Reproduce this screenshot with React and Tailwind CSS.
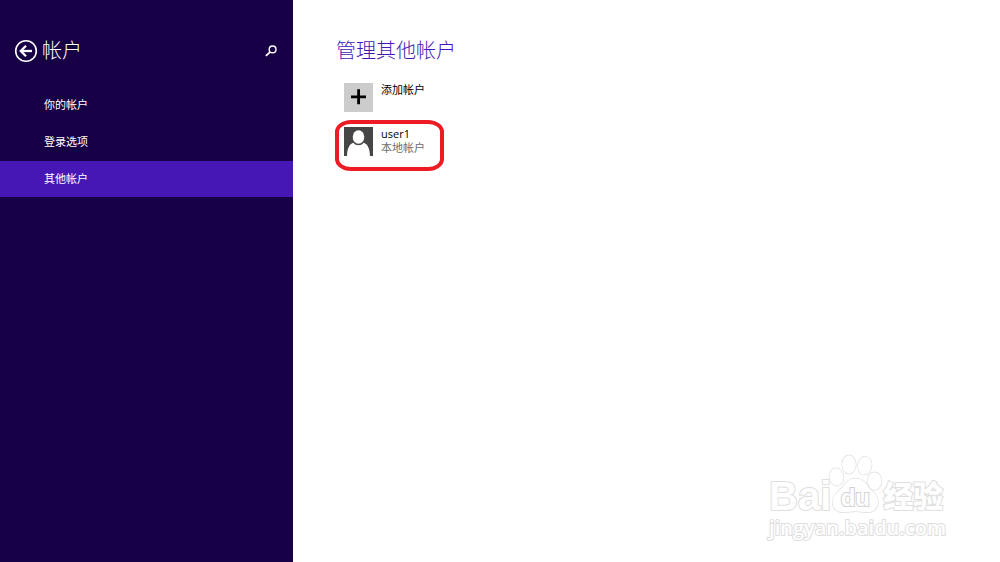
import { useState } from 'react'

const NAV = [
  { id: 'yours',  label: '你的帐户' },
  { id: 'signin', label: '登录选项' },
  { id: 'other',  label: '其他帐户' },
]

function BackIcon() {
  return (
    <svg viewBox="0 0 24 24" className="size-6" fill="none" stroke="currentColor" aria-hidden="true">
      <circle cx="12" cy="12" r="10.3" strokeWidth="1.6" />
      <path d="M7 12H18" strokeWidth="2.300" />
      <path d="M12 6.800 6.800 12l5.200 5.200" strokeWidth="2.300" />
    </svg>
  )
}

function SearchIcon() {
  return (
    <svg viewBox="0 0 12 12" className="size-3" fill="none" stroke="currentColor" aria-hidden="true">
      <circle cx="7.6" cy="4.4" r="3.4" strokeWidth="1.4" />
      <path d="M5.200 6.900.9 10.900" strokeWidth="1.900" />
    </svg>
  )
}

function PlusTile() {
  return (
    <svg viewBox="0 0 29 29" className="size-[29px] shrink-0 bg-[#cccccc]" aria-hidden="true">
      <path d="M7 13.800H22M14.600 6.300V21.300" stroke="#000" strokeWidth="2.800" />
    </svg>
  )
}

function UserTile() {
  return (
    <svg viewBox="0 0 29 29" className="size-[29px] shrink-0 bg-[#464646]" aria-hidden="true">
      <ellipse cx="14.500" cy="10" rx="5.800" ry="6.800" fill="#fff" />
      <path d="M3 29C3.200 22 5.300 17 9.300 15.800c1.300 1.700 3.200 2.500 5.200 2.500s3.900-.8 5.200-2.500C23.700 17 25.800 22 26 29Z" fill="#fff" />
    </svg>
  )
}

function Paw() {
  return (
    <svg viewBox="-1 0 56 60" className="h-[60px] w-14" fill="#fff" stroke="#dedede" strokeWidth="1.400" aria-hidden="true">
      <ellipse cx="8.500" cy="23" rx="7" ry="8.800" transform="rotate(-8 8.500 23)" />
      <ellipse cx="21" cy="10.500" rx="6.800" ry="9.200" />
      <ellipse cx="36.800" cy="11.500" rx="6.800" ry="9" transform="rotate(8 36.800 11.500)" />
      <ellipse cx="46.500" cy="27" rx="7" ry="8.800" />
      <path d="M27.500 24.500c6 0 9.500 3.500 12.500 8 3 4.500 10 7.500 10 15.500 0 7-5 10.500-11 10.300-4.500-.1-7-1-11.500-1s-7 .9-11.500 1C10 58.500 4.500 55 4.500 48c0-8 7-11 10.500-15.500 3.500-4.500 6.500-8 12.500-8Z" />
    </svg>
  )
}

function Watermark() {
  return (
    <div className="pointer-events-none absolute right-[54px] bottom-5 text-white select-none [-webkit-text-stroke:2px_#dedede] [paint-order:stroke_fill]">
      <div className="flex items-end">
        <span className="font-['Liberation_Sans',sans-serif] text-[40px] leading-9 font-bold">Bai</span>
        <div className="relative -ml-1">
          <Paw />
          <span className="absolute inset-x-0 bottom-1 text-center font-['Liberation_Sans',sans-serif] text-2xl leading-6 font-bold [-webkit-text-stroke:2px_#d2d2d2]">du</span>
        </div>
        <span className="font-['Noto_Sans_CJK_SC',sans-serif] text-[30px] leading-10 font-black">经验</span>
      </div>
      <p className="font-['Open_Sans',sans-serif] text-xl leading-7 font-semibold">jingyan.baidu.com</p>
    </div>
  )
}

function App() {
  const [active, setActive] = useState('other')

  return (
    <div className="relative flex min-h-screen bg-white font-['Open_Sans','Noto_Sans_CJK_SC',sans-serif] text-[11px]">
      {/* Sidebar */}
      <aside className="w-[293px] shrink-0 bg-[#180046] text-white">
        <header className="flex h-[87px] items-start pt-[35px] pr-4 pl-[14px]">
          <button type="button" aria-label="返回" className="mt-1">
            <BackIcon />
          </button>
          <h1 className="ml-1 font-['Noto_Sans_CJK_SC',sans-serif] text-xl leading-[30px] font-light">帐户</h1>
          <button type="button" aria-label="搜索" className="mt-[10px] ml-auto">
            <SearchIcon />
          </button>
        </header>
        <nav className="flex flex-col gap-px">
          {NAV.map(n => (
            <button key={n.id} type="button" onClick={() => setActive(n.id)}
              className={`h-9 pl-11 text-left ${active === n.id ? 'bg-[#4617b4]' : ''}`}>
              {n.label}
            </button>
          ))}
        </nav>
      </aside>

      {/* Accounts */}
      <main className="flex-1 pt-[35px] pl-[43px]">
        <h2 className="font-['Noto_Sans_CJK_SC',sans-serif] text-xl leading-[30px] font-light text-[#4617b4]">管理其他帐户</h2>
        <div className="mt-[18px] flex flex-col items-start gap-[15px] pl-2">
          <button type="button" className="flex items-start gap-2 text-left leading-[14px] text-black">
            <PlusTile />
            添加帐户
          </button>
          <div className="relative">
            <button type="button" className="flex items-start gap-2 text-left leading-[14px] text-black">
              <UserTile />
              <span>
                <span className="block">user1</span>
                <span className="block text-[#6e6e6e]">本地帐户</span>
              </span>
            </button>
            <div className="pointer-events-none absolute -top-[7px] -left-[9px] h-[51px] w-[109px] rounded-[16px/12px] border-4 border-[#ed1c24]" />
          </div>
        </div>
      </main>

      <Watermark />
    </div>
  )
}

export default App
